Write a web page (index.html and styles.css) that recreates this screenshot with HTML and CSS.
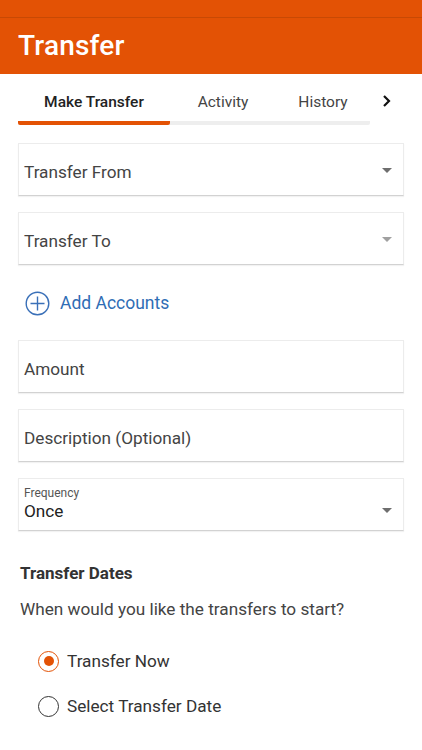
FILE: index.html
```html
<!DOCTYPE html>
<html lang="en">
<head>
    <meta charset="UTF-8">
    <meta name="viewport" content="width=device-width, initial-scale=1.0">
    <title>Transfer</title>
    <link rel="stylesheet" href="styles.css">
</head>
<body>
    <div class="statusbar"></div>
    <header class="appbar">
        <h1>Transfer</h1>
    </header>

    <nav class="tabs">
        <div class="tab-list">
            <div class="tab active tab-make">Make Transfer</div>
            <div class="tab tab-activity">Activity</div>
            <div class="tab tab-history">History</div>
        </div>
        <svg class="tab-more" width="10" height="14" viewBox="0 0 10 14">
            <path d="M2 2 L7 7 L2 12" fill="none" stroke="#111" stroke-width="2.2"/>
        </svg>
    </nav>

    <main class="form">
        <div class="field select">
            <span>Transfer From</span>
            <span class="caret"></span>
        </div>
        <div class="field select">
            <span>Transfer To</span>
            <span class="caret light"></span>
        </div>

        <div class="add-accounts">
            <svg width="25" height="25" viewBox="0 0 25 25">
                <circle cx="12.5" cy="12.5" r="11.3" fill="none" stroke="#3a70b8" stroke-width="1.4"/>
                <path d="M12.5 5.5 V19.5 M5.5 12.5 H19.5" stroke="#3a70b8" stroke-width="1.4"/>
            </svg>
            <span>Add Accounts</span>
        </div>

        <div class="field">
            <span>Amount</span>
        </div>
        <div class="field">
            <span>Description (Optional)</span>
        </div>
        <div class="field select labelled">
            <div class="field-text">
                <div class="field-label">Frequency</div>
                <div class="field-value">Once</div>
            </div>
            <span class="caret low"></span>
        </div>

        <h2 class="section-title">Transfer Dates</h2>
        <p class="question">When would you like the transfers to start?</p>

        <div class="radios">
            <div class="radio-row">
                <span class="radio checked"></span>
                <span>Transfer Now</span>
            </div>
            <div class="radio-row">
                <span class="radio"></span>
                <span>Select Transfer Date</span>
            </div>
        </div>
    </main>
</body>
</html>
```

FILE: styles.css
```css
body {
    margin: 0;
    font-family: Roboto, "Noto Sans", Arial, sans-serif;
    background: #fff;
    color: #444;
}
.statusbar {
    height: 17px;
    background: #e35205;
    border-bottom: 1px solid #c84904;
}
.appbar {
    height: 56px;
    background: #e35205;
    display: flex;
    align-items: center;
    padding: 0 18px;
}
.appbar h1 {
    margin: 0;
    color: #fff;
    font-size: 28px;
    font-weight: 500;
    letter-spacing: 0.2px;
    padding-bottom: 2px;
}
.tabs {
    display: flex;
    align-items: flex-start;
    padding: 0 18px;
    height: 52px;
}
.tab-list {
    display: flex;
    width: 352px;
    height: 51px;
    border-bottom: 4px solid #eeeeee;
    border-radius: 0 0 2px 2px;
    box-sizing: border-box;
}
.tab {
    display: flex;
    align-items: center;
    justify-content: center;
    font-size: 15.5px;
    color: #444;
    padding-top: 8px;
    margin-bottom: -4px;
    border-bottom: 4px solid transparent;
}
.tab.active {
    color: #222;
    font-weight: 500;
    border-bottom-color: #e35205;
    border-radius: 2px;
}
.tab-make { width: 152px; }
.tab-activity { width: 106px; }
.tab-history { width: 94px; }
.tab-more {
    margin: 20px 0 0 12px;
}
.form {
    padding: 17px 18px 0;
}
.field {
    height: 53px;
    border: 1px solid #ececec;
    border-bottom-color: #d2d2d2;
    box-shadow: 0 1px 1px rgba(0,0,0,0.05);
    box-sizing: border-box;
    display: flex;
    align-items: center;
    padding: 5px 10px 0 5px;
    font-size: 17.2px;
    color: #444;
    margin-bottom: 16px;
}
.select {
    justify-content: space-between;
}
.caret {
    width: 0;
    height: 0;
    border-left: 5px solid transparent;
    border-right: 5px solid transparent;
    border-top: 5px solid #6e6e6e;
    margin-right: 1px;
    margin-top: -3px;
}
.caret.light {
    border-top-color: #a0a0a0;
}
.caret.low {
    margin-top: 14px;
}
.labelled {
    padding-top: 0;
    padding-bottom: 3px;
}
.field-label {
    font-size: 12px;
    color: #555;
    margin-bottom: 1px;
}
.field-value {
    font-size: 17.2px;
    color: #222;
}
.add-accounts {
    display: flex;
    align-items: center;
    gap: 10px;
    color: #2f6db5;
    font-size: 17.5px;
    height: 26px;
    margin: 25px 0 24px 7px;
}
.section-title {
    margin: 32px 0 0 2px;
    font-size: 17px;
    font-weight: 700;
    color: #333;
}
.question {
    margin: 16px 0 0 2px;
    font-size: 17.2px;
    color: #444;
}
.radios {
    margin: 30px 0 0 20px;
}
.radio-row {
    display: flex;
    align-items: center;
    gap: 8px;
    font-size: 17.2px;
    color: #333;
    height: 24px;
}
.radio-row + .radio-row {
    margin-top: 21px;
}
.radio {
    width: 19px;
    height: 19px;
    border: 1.5px solid #333;
    border-radius: 50%;
    position: relative;
}
.radio.checked {
    border-color: #e35205;
}
.radio.checked::after {
    content: "";
    position: absolute;
    left: 4.5px;
    top: 4.5px;
    width: 10px;
    height: 10px;
    border-radius: 50%;
    background: #e35205;
}
```
